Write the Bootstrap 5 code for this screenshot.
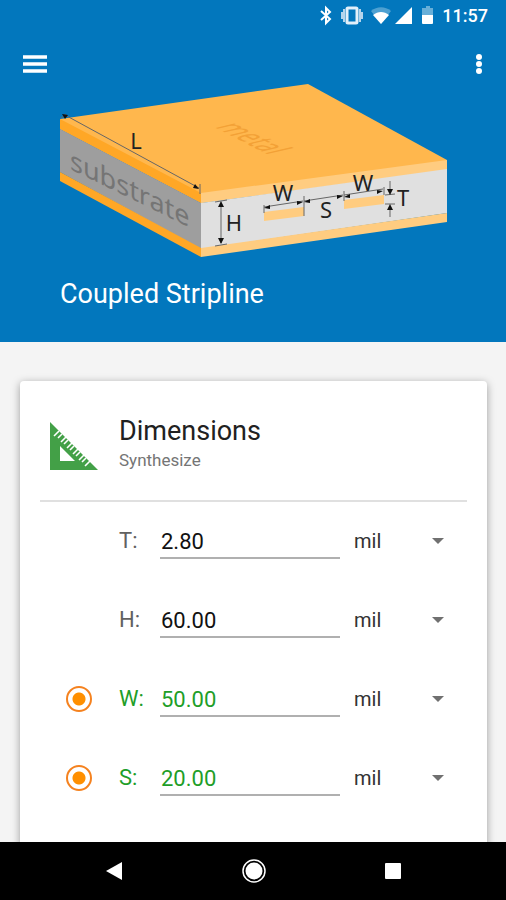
<!DOCTYPE html>
<html lang="en">
<head>
<meta charset="utf-8">
<meta name="viewport" content="width=device-width, initial-scale=1">
<title>Coupled Stripline</title>
<link href="https://cdn.jsdelivr.net/npm/bootstrap@5.3.0/dist/css/bootstrap.min.css" rel="stylesheet">
<style>
  body { font-family: Roboto, sans-serif; background: #f4f4f4; color: #212121; }
  .app-header { background: #0277bd; }
  .status-bar { height: 32px; padding-right: 18px; }
  .clock { font-size: 18px; line-height: 24px; font-weight: 500; }
  .toolbar { height: 64px; padding: 0 15px 0 17px; }
  .icon-btn { width: 36px; height: 36px; }
  .hero { margin-top: -16px; padding: 0 58px 0 60px; }
  .hero svg { max-width: 388px; }
  .screen-title { font-size: 27px; line-height: 32px; padding: 18px 0 32px; }
  .content-area { padding: 39px 19px 0 20px; }
  .panel { border-radius: 4px; box-shadow: 0 2px 9px rgba(0, 0, 0, .36); }
  .panel-head { margin: 0 20px; padding: 34px 10px 27px; border-bottom: 2px solid #e0e0e0; }
  .panel-icon { width: 69px; padding-top: 7px; }
  .panel-title { font-size: 27px; line-height: 32px; }
  .panel-sub { font-size: 17px; line-height: 26px; color: #757575; }
  .fields { padding: 18px 32px 24px 40px; }
  .field-row { height: 79px; padding-bottom: 37px; }
  .pick { width: 59px; padding-left: 6px; }
  .pick input { appearance: none; width: 26px; height: 26px; border: 2px solid #f5821f; border-radius: 50%; margin: 0;
    background: radial-gradient(circle, #ff8f00 6px, transparent 7px); }
  .field-name { width: 41px; font-size: 22px; line-height: 28px; color: #616161; }
  .field-value { width: 180px; min-width: 0; height: 36px; padding: 2px 0 0 1px; border: 0; border-bottom: 2px solid #b0b0b0;
    border-radius: 0; font-size: 22px; background: transparent; color: #111; outline: 0; }
  .solved .field-name, .solved .field-value { color: #1e9e28; }
  .unit { appearance: none; flex: 1 1 0; min-width: 0; height: 36px; margin-left: 14px; padding: 0; border: 0; font-size: 20px; color: #333;
    background: url("data:image/svg+xml,%3Csvg xmlns='http://www.w3.org/2000/svg' width='12' height='6'%3E%3Cpath d='M0 0h12L6 6z' fill='%23707070'/%3E%3C/svg%3E") no-repeat right 11px center; }
  .system-nav { height: 58px; background: #000; padding: 0 43px 0 44px; }
  .system-nav .btn { flex: 1 1 0; }
</style>
<script src="https://cdn.jsdelivr.net/npm/bootstrap@5.3.0/dist/js/bootstrap.bundle.min.js"></script>
</head>
<body class="d-flex flex-column vh-100 overflow-hidden">
<header class="app-header text-white flex-shrink-0">
  <div class="status-bar d-flex align-items-center justify-content-end">
    <svg width="118" height="24" viewBox="0 0 118 24" aria-hidden="true">
      <path d="M5 7l9 8-4 4V4l4 4-9 8" fill="none" stroke="#fff" stroke-width="2"/>
      <rect x="31" y="4" width="10" height="15" rx="1" fill="none" stroke="#e3f0fa" stroke-width="3"/>
      <path d="M28 5v13M44 5v13M26 8v7M46 8v7" stroke="#b5d5ec" stroke-width="2"/>
      <path d="M55 7c6-5 14-5 20 0L65 20z" fill="#4da0d1"/>
      <path d="M57 11c5-4 11-4 16 0l-8 9z" fill="#fff"/>
      <path d="M96 3v17H79z" fill="#fff"/>
      <path d="M106 4h4V2h4v2h3v8h-11z" fill="#68afd8"/>
      <path d="M106 11h11v8q0 1-1 1h-9q-1 0-1-1z" fill="#fff"/>
    </svg>
    <span class="clock ms-2">11:57</span>
  </div>
  <nav class="toolbar d-flex align-items-center justify-content-between" aria-label="Main">
    <button type="button" class="icon-btn btn p-0 d-flex align-items-center justify-content-center" aria-label="Open menu">
      <svg width="24" height="18" viewBox="0 0 24 18"><path d="M0 2h24M0 9h24M0 16h24" stroke="#fff" stroke-width="3.5"/></svg>
    </button>
    <button type="button" class="icon-btn btn p-0 d-flex align-items-center justify-content-end" aria-label="More options">
      <svg width="22" height="22" viewBox="0 0 22 22" fill="#fff"><circle cx="11" cy="4" r="3"/><circle cx="11" cy="11" r="3"/><circle cx="11" cy="18" r="3"/></svg>
    </button>
  </nav>
  <div class="hero">
    <svg class="d-block w-100" viewBox="60 80 388 180" role="img" aria-label="Coupled stripline cross-section">
      <path d="M60 119L308 84l139 76v11L201 203 60 129z" fill="#ffb74d"/>
      <path d="M60 119l141 74v10L60 129z" fill="#ffa726"/>
      <path d="M201 193l246-33v10L201 203z" fill="#ffcc80"/>
      <path d="M60 129l141 74v46L60 172z" fill="#9e9e9e"/>
      <path d="M201 203l246-34v44l-246 36z" fill="#e0e0e0"/>
      <path d="M60 172l141 76v9L60 181z" fill="#ffa726"/>
      <path d="M201 248l246-35v9l-246 35z" fill="#ffcc80"/>
      <path d="M264 212l40-5v9l-40 5zM344 200l40-5v9l-40 5z" fill="#ffcc80"/>
      <g stroke="#666" stroke-width="1" fill="none">
        <path d="M65 115l134 73M200 184v10M61 118l5-4M221 203v40M215 202l12-2M215 246l12-2M264 207l39-6M304 201l39-6M344 195l39-6M264 205v8M304 196v20M344 191v10M384 187v8M390 181v11M390 207v10M385 195l10-1M385 204h10"/>
      </g>
      <path d="M62 114l6 1-3 4zM199 189l-6-1 2-4zM221 201l3 6h-6zM221 244l3-6h-6zM264 208l6-3v4zM303 202l-6-1v4zM304 202l6-3v4zM343 196l-6-1v4zM344 197l6-3v4zM383 191l-6-1v4zM390 195l-3-6h6zM390 204l-3 6h6z" fill="#111"/>
      <g font-family="Noto Sans, sans-serif" font-size="22" fill="#222" text-anchor="middle">
        <text x="136" y="149">L</text><text x="234" y="231">H</text><text x="283" y="201">W</text>
        <text x="326" y="218">S</text><text x="363" y="191">W</text><text x="403" y="206">T</text>
      </g>
      <text transform="translate(70 169) skewY(26)" font-family="Noto Sans, sans-serif" font-size="27" fill="#757575">substrate</text>
      <text transform="translate(214 127) rotate(27) skewX(-50)" font-family="Noto Sans, sans-serif" font-size="23" fill="#f3a136">metal</text>
    </svg>
    <h1 class="screen-title fw-normal m-0">Coupled Stripline</h1>
  </div>
</header>
<main class="content-area flex-grow-1 overflow-hidden">
  <section class="panel bg-white">
    <div class="panel-head d-flex">
      <div class="panel-icon">
        <svg width="48" height="48" viewBox="0 0 48 48" aria-hidden="true">
          <path fill="#43a047" fill-rule="evenodd" d="M0 0l48 48H0zM10 24v15h15z"/>
          <path stroke="#fff" stroke-width="1.6" d="M4 14l5-5M8 16l4-4M11 20l5-5M14 22l4-4M17 26l5-5M20 28l4-4M23 32l5-5M26 34l4-4M29 38l5-5M32 40l4-4M35 44l5-5"/>
        </svg>
      </div>
      <div>
        <h2 class="panel-title fw-normal m-0">Dimensions</h2>
        <div class="panel-sub">Synthesize</div>
      </div>
    </div>
    <form class="fields">
      <div class="field-row d-flex align-items-center">
        <span class="pick"></span><label class="field-name" for="t">T:</label>
        <input class="field-value" id="t" type="text" value="2.80">
        <select class="unit" aria-label="Unit for T"><option>mil</option></select>
      </div>
      <div class="field-row d-flex align-items-center">
        <span class="pick"></span><label class="field-name" for="h">H:</label>
        <input class="field-value" id="h" type="text" value="60.00">
        <select class="unit" aria-label="Unit for H"><option>mil</option></select>
      </div>
      <div class="field-row solved d-flex align-items-center">
        <span class="pick d-flex"><input type="radio" name="solve-w" aria-label="Solve for W" checked></span><label class="field-name" for="w">W:</label>
        <input class="field-value" id="w" type="text" value="50.00">
        <select class="unit" aria-label="Unit for W"><option>mil</option></select>
      </div>
      <div class="field-row solved d-flex align-items-center">
        <span class="pick d-flex"><input type="radio" name="solve-s" aria-label="Solve for S" checked></span><label class="field-name" for="s">S:</label>
        <input class="field-value" id="s" type="text" value="20.00">
        <select class="unit" aria-label="Unit for S"><option>mil</option></select>
      </div>
    </form>
  </section>
</main>
<footer class="system-nav d-flex align-items-center flex-shrink-0">
  <button type="button" class="btn p-0 d-flex justify-content-center" aria-label="Back"><svg width="18" height="18" viewBox="0 0 18 18"><path d="M17 0v18L1 9z" fill="#fff"/></svg></button>
  <button type="button" class="btn p-0 d-flex justify-content-center" aria-label="Home"><svg width="24" height="24" viewBox="0 0 24 24"><circle cx="12" cy="12" r="8.5" fill="#fff"/><circle cx="12" cy="12" r="11" fill="none" stroke="#fff" stroke-width="1.5"/></svg></button>
  <button type="button" class="btn p-0 d-flex justify-content-center" aria-label="Recent apps"><svg width="16" height="16" viewBox="0 0 16 16"><rect width="16" height="16" rx="1" fill="#fff"/></svg></button>
</footer>
</body>
</html>
